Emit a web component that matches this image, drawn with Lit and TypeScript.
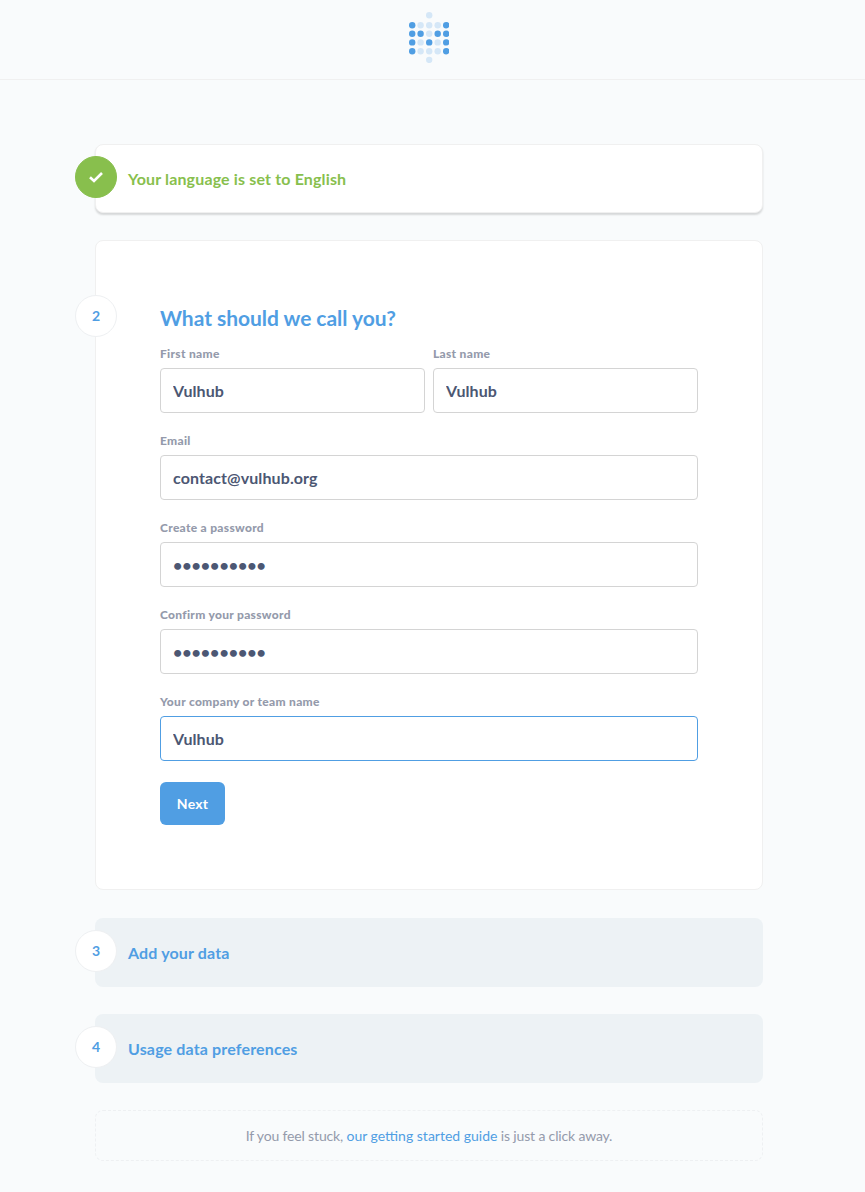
import { LitElement, html, css, svg } from "lit";
import { customElement } from "lit/decorators.js";

const LOGO_ROWS = ["..l..", "DlllD", "DDlDD", "DlDlD", "DlllD", "..l.."];
const LOGO_Y = [3.2, 13.2, 21.8, 30.4, 39.2, 47.9];

function logo() {
  const cols = [3.2, 11.6, 20.2, 28.7, 37.2];
  const dots = LOGO_ROWS.flatMap((row, r) =>
    [...row].map((c, i) => {
      if (c === ".") return null;
      return svg`<circle cx=${cols[i]} cy=${LOGO_Y[r]} r="3.2" fill=${c === "D" ? "#509ee3" : "#d5e7f7"}></circle>`;
    })
  );
  return html`<svg class="logo" width="40" height="51" viewBox="0 0 40 51">${dots}</svg>`;
}

@customElement("setup-field")
class SetupField extends LitElement {
  static properties = {
    label: {},
    value: {},
    type: {},
    active: { type: Boolean },
  };
  label = "";
  value = "";
  type = "text";
  active = false;

  static styles = css`
    :host {
      display: block;
    }
    label {
      display: block;
      height: 14px;
      line-height: 14px;
      margin-bottom: 7px;
      font-size: 12px;
      font-weight: 900;
      letter-spacing: 0.3px;
      color: #949aab;
    }
    input {
      display: block;
      box-sizing: border-box;
      width: 100%;
      height: 45px;
      padding: 0 12px;
      font-family: Lato, sans-serif;
      font-size: 16px;
      font-weight: 700;
      letter-spacing: 0.1px;
      color: #4c5773;
      background: #fff;
      border: 1px solid #d4d4d4;
      border-radius: 4px;
      outline: none;
    }
    input[type="password"] {
      letter-spacing: 0;
    }
    input.active {
      border-color: #509ee3;
    }
  `;

  render() {
    return html`
      <label>${this.label}</label>
      <input class=${this.active ? "active" : ""} type=${this.type} .value=${this.value} />
    `;
  }
}

@customElement("app-root")
class AppRoot extends LitElement {
  static styles = css`
    :host {
      display: block;
      min-height: 1192px;
      background: #f9fbfc;
      font-family: Lato, sans-serif;
    }
    header {
      box-sizing: border-box;
      height: 80px;
      display: flex;
      justify-content: center;
      padding: 12px 102px 0 95px;
      border-bottom: 1px solid #f0f0f0;
    }
    .logo {
      display: block;
    }
    main {
      width: 668px;
      margin-left: 95px;
      padding-top: 64px;
      display: flex;
      flex-direction: column;
    }
    .step {
      position: relative;
      box-sizing: border-box;
      border-radius: 8px;
    }
    .badge {
      position: absolute;
      left: -20px;
      box-sizing: border-box;
      width: 42px;
      height: 42px;
      padding-bottom: 2px;
      border-radius: 50%;
      border: 1px solid #eef0f2;
      background: #fff;
      color: #509ee3;
      font-size: 14px;
      font-weight: 700;
      display: flex;
      align-items: center;
      justify-content: center;
    }
    .step-title {
      font-size: 16px;
      font-weight: 700;
      letter-spacing: 0.15px;
      line-height: 20px;
      padding-left: 33px;
    }
    .done {
      height: 69px;
      margin-bottom: 27px;
      background: #fff;
      border: 1px solid #f0f0f0;
      box-shadow: 0 2px 2px rgba(0, 0, 0, 0.14);
      display: flex;
      align-items: center;
    }
    .done .badge {
      top: 11px;
      left: -21px;
      padding-bottom: 0;
      background: #88bf4d;
      border-color: #88bf4d;
    }
    .done .step-title {
      color: #88bf4d;
      padding-left: 32px;
    }
    .active {
      height: 650px;
      margin-bottom: 28px;
      background: #fff;
      border: 1px solid #f0f0f0;
      padding: 63px 64px 0;
    }
    .active .badge {
      top: 54px;
      left: -21px;
    }
    h2 {
      margin: 0 0 16px;
      font-size: 21px;
      line-height: 27px;
      font-weight: 700;
      letter-spacing: -0.04px;
      color: #509ee3;
    }
    .fields {
      display: flex;
      flex-direction: column;
      gap: 21px;
    }
    .pair {
      display: grid;
      grid-template-columns: 1fr 1fr;
      gap: 8px;
    }
    button {
      display: block;
      width: 65px;
      height: 43px;
      margin-top: 21px;
      padding: 0;
      font-family: Lato, sans-serif;
      font-size: 14px;
      font-weight: 700;
      letter-spacing: 0.2px;
      color: #fff;
      background: #509ee3;
      border: 0;
      border-radius: 6px;
    }
    .todo {
      height: 69px;
      margin-bottom: 27px;
      background: #edf2f5;
      display: flex;
      align-items: center;
      color: #509ee3;
    }
    .todo .badge {
      top: 12px;
    }
    .help {
      height: 51px;
      display: flex;
      align-items: center;
      justify-content: center;
      border: 1px dashed #eef0f2;
      font-size: 14px;
      letter-spacing: -0.16px;
      color: #949aab;
    }
    .help a {
      letter-spacing: 0;
      color: #509ee3;
      text-decoration: none;
    }
  `;

  render() {
    return html`
      <header>${logo()}</header>
      <main>
        <section class="step done">
          <div class="badge">
            <svg width="16" height="12" viewBox="0 0 16 12">
              <path d="M2 6.2 6 10 14 2" fill="none" stroke="#fff" stroke-width="2.6"></path>
            </svg>
          </div>
          <div class="step-title">Your language is set to English</div>
        </section>
        <section class="step active">
          <div class="badge">2</div>
          <h2>What should we call you?</h2>
          <div class="fields">
            <div class="pair">
              <setup-field label="First name" value="Vulhub"></setup-field>
              <setup-field label="Last name" value="Vulhub"></setup-field>
            </div>
            <setup-field label="Email" value="contact@vulhub.org"></setup-field>
            <setup-field label="Create a password" type="password" value="vulhub1234"></setup-field>
            <setup-field label="Confirm your password" type="password" value="vulhub1234"></setup-field>
            <setup-field label="Your company or team name" value="Vulhub" active></setup-field>
          </div>
          <button>Next</button>
        </section>
        <section class="step todo">
          <div class="badge">3</div>
          <div class="step-title">Add your data</div>
        </section>
        <section class="step todo">
          <div class="badge">4</div>
          <div class="step-title">Usage data preferences</div>
        </section>
        <section class="step help">
          <span>If you feel stuck, <a href="#">our getting started guide</a> is just a click away.</span>
        </section>
      </main>
    `;
  }
}
